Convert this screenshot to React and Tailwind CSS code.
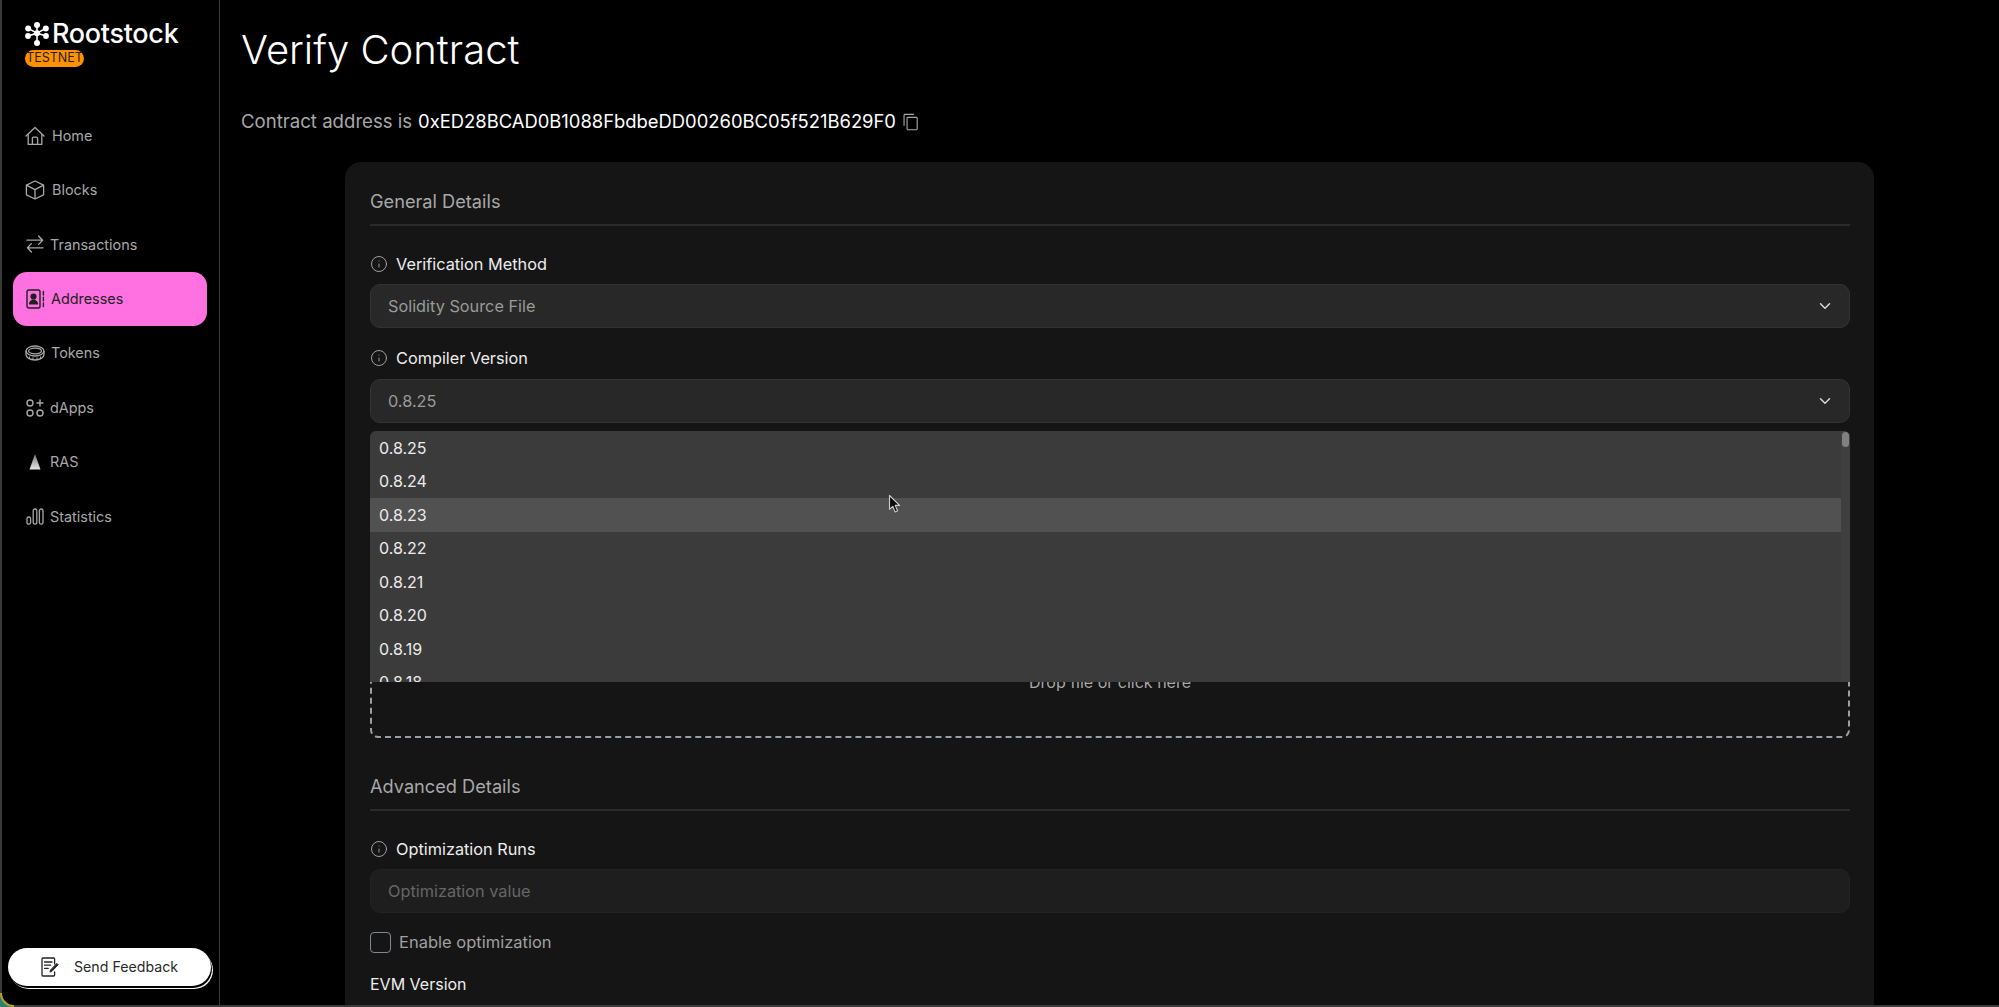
import React from "react";
import { ChevronDown, Info } from "lucide-react";

function Logo() {
  return (
    <svg width="24" height="24" viewBox="0 0 24 24" fill="#fff" className="shrink-0">
      <circle cx="12" cy="3" r="3" />
      <circle cx="3.2" cy="6.4" r="3" />
      <circle cx="20.8" cy="6.4" r="3" />
      <circle cx="3" cy="14" r="2.9" />
      <circle cx="21" cy="14" r="2.9" />
      <circle cx="12" cy="21" r="3" />
      <circle cx="12" cy="11.2" r="3" />
      <path d="M12 3v18M3.2 6.4l8.8 4.8 8.8-4.8M3 14l9-2.8 9 2.8" stroke="#fff" strokeWidth="1.6" fill="none" />
    </svg>
  );
}

function IconHome() {
  return (
    <svg width="20" height="20" viewBox="0 0 20 20" fill="none" stroke="#a8a8a8" strokeWidth="1.3" strokeLinejoin="round">
      <path d="M1 10 10 1.5 19 10" strokeLinecap="round" />
      <path d="M3.2 8.2V18.4H16.8V8.2" />
      <path d="M7.4 18.4v-6.2a1 1 0 0 1 1-1h3.2a1 1 0 0 1 1 1v6.2" />
    </svg>
  );
}
function IconBox() {
  return (
    <svg width="20" height="20" viewBox="0 0 20 20" fill="none" stroke="#a8a8a8" strokeWidth="1.3" strokeLinejoin="round">
      <path d="M10 1 18.6 5.2v9.6L10 19 1.4 14.8V5.2Z" />
      <path d="M1.4 5.2 10 9.6l8.6-4.4M10 9.6V19" />
    </svg>
  );
}
function IconTx() {
  return (
    <svg width="18" height="18" viewBox="0 0 18 18" fill="none" stroke="#a8a8a8" strokeWidth="1.3" strokeLinecap="round" strokeLinejoin="round">
      <path d="M1 5.2h15.6M12.6 1l4 4.2-4 4.2" />
      <path d="M17 12.8H1.4M5.4 8.6l-4 4.2 4 4.2" />
    </svg>
  );
}
function IconAddr() {
  return (
    <svg width="19" height="20" viewBox="0 0 19 20" fill="none" stroke="#1f1f1f" strokeWidth="1.4" strokeLinejoin="round">
      <rect x="1" y="1" width="13" height="18" rx="1.8" />
      <circle cx="7.5" cy="7.6" r="2.4" fill="#1f1f1f" />
      <path d="M3.6 14.8c.5-2.4 2-3.4 3.9-3.4s3.4 1 3.9 3.4z" fill="#1f1f1f" />
      <path d="M17.4 2.5v3.5M17.4 8.2v3.5M17.4 14v3.5" strokeLinecap="round" />
    </svg>
  );
}
function IconTokens() {
  return (
    <svg width="20" height="16" viewBox="0 0 20 16" fill="none" stroke="#a8a8a8" strokeWidth="1.3">
      <ellipse cx="10" cy="6" rx="9" ry="5" />
      <ellipse cx="10" cy="6" rx="6.4" ry="2.8" />
      <path d="M1 6v3.6C1 12.6 5 15 10 15s9-2.4 9-5.4V6" />
      <path d="M4.5 11.5v2.4M8 12.4v2.4M12 12.4v2.4M15.5 11.5v2.4" strokeWidth="1" />
    </svg>
  );
}
function IconDapps() {
  return (
    <svg width="18" height="18" viewBox="0 0 18 18" fill="none" stroke="#a8a8a8" strokeWidth="1.4">
      <circle cx="4" cy="4" r="3" />
      <circle cx="4" cy="14" r="3" />
      <circle cx="14" cy="14" r="3" />
      <path d="M14 1v6M11 4h6" strokeLinecap="round" />
    </svg>
  );
}
function IconRas() {
  return (
    <svg width="14" height="16" viewBox="0 0 14 16">
      <defs>
        <linearGradient id="rasg" x1="0" y1="0" x2="0" y2="1">
          <stop offset="0" stopColor="#777" />
          <stop offset="1" stopColor="#e6e6e6" />
        </linearGradient>
      </defs>
      <path d="M7 0 12.5 15.5H1.5Z" fill="url(#rasg)" />
    </svg>
  );
}
function IconStats() {
  return (
    <svg width="18" height="17" viewBox="0 0 18 17" fill="none" stroke="#a8a8a8" strokeWidth="1.3">
      <rect x="1" y="9" width="3.6" height="7.2" rx="1.8" />
      <rect x="7.2" y="1" width="3.6" height="15.2" rx="1.8" />
      <rect x="13.4" y="1" width="3.6" height="15.2" rx="1.8" />
    </svg>
  );
}
function IconFeedback() {
  return (
    <svg width="18" height="20" viewBox="0 0 18 20" fill="none" stroke="#222" strokeWidth="1.3" strokeLinecap="round" strokeLinejoin="round">
      <path d="M13.6 7V2a1 1 0 0 0-1-1H2a1 1 0 0 0-1 1v16a1 1 0 0 0 1 1h10.6a1 1 0 0 0 1-1v-3" />
      <path d="M3.6 5h7.4M3.6 8.2h6M3.6 11.4h3.6" />
      <path d="M16 6.5l1.2 1.2-6.4 6.8-1.9.6.6-1.9z" fill="#222" stroke="#222" strokeWidth="0.8" />
    </svg>
  );
}
function IconCopy() {
  return (
    <svg width="18" height="18" viewBox="0 0 24 24" fill="#a8a8a8" className="ml-[6px] shrink-0">
      <path d="M16 1H4c-1.1 0-2 .9-2 2v14h1.5V2.5H16V1zm3 4H8c-1.1 0-2 .9-2 2v14c0 1.1.9 2 2 2h11c1.1 0 2-.9 2-2V7c0-1.1-.9-2-2-2zm.5 16.5h-12v-15h12v15z" />
    </svg>
  );
}
function Cursor() {
  return (
    <svg width="14" height="20" viewBox="0 0 14 20" className="absolute left-[888px] top-[494px] z-20">
      <path d="M1.5 1.5v13.8l3.2-3 2.4 5.6 2.5-1.1-2.4-5.4h4.4Z" fill="#0c0c0c" stroke="#cfcfcf" strokeWidth="1.1" strokeLinejoin="round" />
    </svg>
  );
}

const nav = [
  ["Home", <IconHome />, "ml-[7px]"],
  ["Blocks", <IconBox />, "ml-[7px]"],
  ["Transactions", <IconTx />, "ml-[5px]"],
  ["Addresses", <IconAddr />, "ml-[6px]", true],
  ["Tokens", <IconTokens />, "ml-[6px]"],
  ["dApps", <IconDapps />, "ml-[5px]"],
  ["RAS", <IconRas />, "ml-[5px]"],
  ["Statistics", <IconStats />, "ml-[5px]"],
];

function Label({ children }) {
  return (
    <div className="flex h-6 items-center gap-2">
      <Info size={18} strokeWidth={1.3} className="text-[#a0a0a0]" />
      <span className="text-[16.3px] text-[#ededed]">{children}</span>
    </div>
  );
}

function Select({ value, top }) {
  return (
    <div className={top}>
      <div className="flex h-11 items-center justify-between rounded-[10px] border border-[#333333] bg-[#282828] pl-[17px] pr-[15px]">
        <span className="text-[16.3px] text-[#9a9a9a]">{value}</span>
        <ChevronDown size={18} strokeWidth={2} className="text-[#d8d8d8]" />
      </div>
    </div>
  );
}

const versions = ["0.8.25", "0.8.24", "0.8.23", "0.8.22", "0.8.21", "0.8.20", "0.8.19", "0.8.18"];

export default function App() {
  return (
    <div className="relative flex h-[1007px] w-[1999px] overflow-hidden bg-black" style={{ fontFamily: '"Inter", "Noto Sans", sans-serif' }}>
      <aside className="flex h-full w-[220px] shrink-0 flex-col border-l-2 border-r border-[#3a3a3a] pl-[11px] pr-[12px]">
        <div className="h-[108.6px] pl-[12px] pt-[20px]">
          <div className="flex h-7 items-center gap-[3px]">
            <Logo />
            <span className="text-[27px] font-medium tracking-[-0.3px] text-white">Rootstock</span>
          </div>
          <div className="mt-[2px] flex h-[17px] w-[59px] items-center justify-center rounded-full bg-[#ff9100] text-[12.5px] text-[#222]">TESTNET</div>
        </div>
        <nav className="flex flex-col gap-[0.4px]">
          {nav.map(([name, icon, ml, active]) => (
            <div
              key={name}
              className={
                active
                  ? "flex h-[54px] items-center rounded-[14px] bg-[#ff71e0] pl-[12px] text-[#222]"
                  : "flex h-[54px] items-center pl-[12px] text-[#a8a8a8]"
              }
            >
              <span className="flex w-[20px] justify-center">{icon}</span>
              <span className={`${ml} text-[14.4px]`}>{name}</span>
            </div>
          ))}
        </nav>
        <div className="mb-[21px] -ml-[5px] mt-auto flex h-[38px] w-[203px] items-center rounded-full bg-white pl-[33px] shadow-[1px_2px_0_0_#000,2px_3px_0_0_#fff]">
          <IconFeedback />
          <span className="ml-[15px] text-[14.2px] text-[#2a2a2a]">Send Feedback</span>
        </div>
      </aside>

      <main className="flex-1 pl-[21px] pr-[125px]">
        <h1 className="mt-[26px] h-[48px] text-[40px] font-light leading-[48px] text-white">Verify Contract</h1>
        <div className="mt-[36px] flex h-6 items-center">
          <span className="text-[18.6px] text-[#a8a8a8]">Contract address is</span>
          <span className="ml-[6px] text-[18.4px] text-white">0xED28BCAD0B1088FbdbeDD00260BC05f521B629F0</span>
          <IconCopy />
        </div>
        <section className="ml-[104px] mt-[28px] h-[900px] rounded-t-[16px] bg-[#151515] pl-[25px] pr-[24px]">
          <h2 className="flex h-[64px] items-end border-b-2 border-[#2b2b2b] pb-[9px] text-[18.2px] text-[#a8a8a8]">General Details</h2>
          <div className="mt-[26px]"><Label>Verification Method</Label></div>
          <Select value="Solidity Source File" top="mt-2" />
          <div className="mt-[18px]"><Label>Compiler Version</Label></div>
          <div className="relative pt-[9px]">
            <Select value="0.8.25" />
            <div className="absolute left-0 right-0 top-[61px] z-10 h-[251px] overflow-hidden rounded-t-[6px] bg-[#3b3b3b]">
              {versions.map((v) => (
                <div key={v} className={v === "0.8.23" ? "mr-[9px] flex h-[33.5px] items-center bg-[#515151] pl-[9px] text-[16px] text-[#ececec]" : "flex h-[33.5px] items-center pl-[9px] text-[16px] text-[#ececec]"}>
                  {v}
                </div>
              ))}
              <div className="absolute bottom-0 right-0 top-0 w-[9px] bg-[#3f3f3f]">
                <div className="mx-auto mt-[1px] h-[15px] w-[7px] rounded-full bg-[#808080]" />
              </div>
            </div>
          </div>
          <div className="mt-[203px] flex h-[112px] items-center justify-center rounded-[8px] border-2 border-dashed border-[#9a9fa6] text-[16px] text-[#a8a8a8]">
            Drop file or click here
          </div>
          <h2 className="flex h-[73px] items-end border-b-2 border-[#2b2b2b] pb-[9px] text-[18.2px] text-[#a8a8a8]">Advanced Details</h2>
          <div className="mt-[26px]"><Label>Optimization Runs</Label></div>
          <div className="mt-2 flex h-11 items-center rounded-[10px] border border-[#222222] bg-[#1e1e1e] pl-[17px] text-[16.3px] text-[#666666]">Optimization value</div>
          <div className="mt-[19px] flex h-[21px] items-center gap-2">
            <div className="h-[21px] w-[21px] rounded-[4px] border border-[#7f8792]" />
            <span className="text-[16.5px] text-[#a0a0a0]">Enable optimization</span>
          </div>
          <div className="mt-[19px] text-[16px] text-[#ededed]">EVM Version</div>
        </section>
      </main>
      <Cursor />
      <div className="absolute bottom-0 left-0 right-0 h-[2px] bg-[#3a3a3a]" />
      <div className="absolute bottom-0 left-0 h-[14px] w-[14px] bg-[#2f7f6a]">
        <div className="h-full w-full rounded-bl-[14px] border-b-2 border-l-2 border-[#b8a030] bg-black" />
      </div>
    </div>
  );
}
